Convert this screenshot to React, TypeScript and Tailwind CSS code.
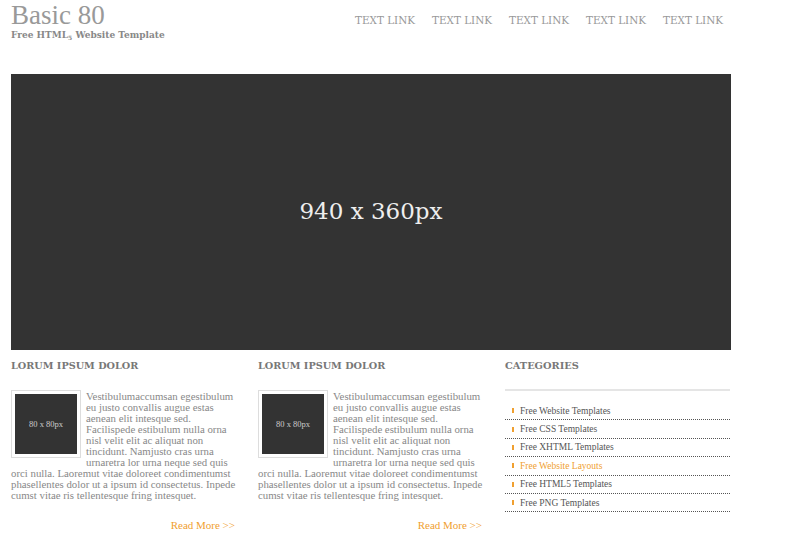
import React from 'react';

const links = ['TEXT LINK', 'TEXT LINK', 'TEXT LINK', 'TEXT LINK', 'TEXT LINK'];

const categories = [
  { name: 'Free Website Templates', active: false },
  { name: 'Free CSS Templates', active: false },
  { name: 'Free XHTML Templates', active: false },
  { name: 'Free Website Layouts', active: true },
  { name: 'Free HTML5 Templates', active: false },
  { name: 'Free PNG Templates', active: false },
];

const Article: React.FC = () => (
  <div className="w-[225px]">
    <h2 className="text-[9.7px] font-bold text-[#777] leading-[14px] mt-[9px]">LORUM IPSUM DOLOR</h2>
    <div className="mt-[17px] text-[10.8px] leading-[11px] text-[#888] font-['Liberation_Serif',serif]">
      <div className="float-left mr-[5px] mb-[5px] border border-[#ddd] p-[3px]">
        <div className="w-[62px] h-[60px] bg-[#333] flex items-center justify-center text-[8.5px] text-[#ccc]">
          80 x 80px
        </div>
      </div>
      <p className="pt-[1px]">
        Vestibulumaccumsan egestibulum eu justo convallis augue estas aenean elit intesque sed. Facilispede estibulum
        nulla orna nisl velit elit ac aliquat non tincidunt. Namjusto cras urna urnaretra lor urna neque sed quis orci
        nulla. Laoremut vitae doloreet condimentumst phasellentes dolor ut a ipsum id consectetus. Inpede cumst vitae
        ris tellentesque fring intesquet.
      </p>
    </div>
    <div className="clear-both text-right mt-[18px] pr-[1px] text-[11px] leading-[12px] text-[#f0a030] font-['Liberation_Serif',serif]">
      Read More &gt;&gt;
    </div>
  </div>
);

export default function App() {
  return (
    <div className="w-[799px] h-[552px] bg-white font-['DejaVu_Serif',serif] overflow-hidden">
      <div className="w-[720px] ml-[11px]">
        <header className="flex justify-between h-[74px]">
          <div className="pt-[1px]">
            <h1 className="text-[27px] leading-[29px] text-[#999] font-['Liberation_Serif',serif]">Basic 80</h1>
            <p className="text-[9px] font-bold text-[#888] leading-[10px]">
              Free HTML<sub className="text-[6px]">5</sub> Website Template
            </p>
          </div>
          <nav className="flex gap-[17px] pt-[13px] pr-[8px]">
            {links.map((l, i) => (
              <a key={i} className="text-[10.4px] text-[#999] leading-[14px] w-[60px] whitespace-nowrap">{l}</a>
            ))}
          </nav>
        </header>
        <div className="h-[276px] bg-[#333] flex items-center justify-center">
          <span className="text-[23px] text-[#eee] pb-[2px]">940 x 360px</span>
        </div>
        <div className="flex gap-[22px]">
          <Article />
          <Article />
          <div className="w-[225px]">
            <h2 className="text-[9.8px] font-bold text-[#777] leading-[14px] mt-[9px]">CATEGORIES</h2>
            <div className="mt-[16px] border-t-2 border-[#e5e5e5]" />
            <ul className="mt-[11px] font-['Liberation_Serif',serif]">
              {categories.map((c) => (
                <li key={c.name} className="border-b border-dotted border-[#555] pl-[7px] h-[18.4px] flex items-center gap-[6px]">
                  <span className="w-[2px] h-[5px] bg-[#f0a030]" />
                  <span className={`text-[9.5px] ${c.active ? 'text-[#f0a030]' : 'text-[#555]'}`}>{c.name}</span>
                </li>
              ))}
            </ul>
          </div>
        </div>
      </div>
    </div>
  );
}
